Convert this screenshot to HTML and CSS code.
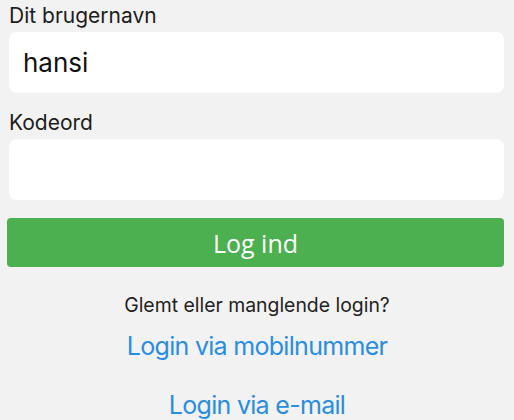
FILE: index.html
```html
<!DOCTYPE html>
<html lang="da">
<head>
    <meta charset="UTF-8">
    <meta name="viewport" content="width=device-width, initial-scale=1.0">
    <title>Log ind</title>
    <link rel="stylesheet" href="styles.css">
</head>
<body>
    <div class="container">
        <form id="login-form">
            <div class="form-group">
                <label for="brugernavn">Dit brugernavn</label>
                <input type="text" id="brugernavn" value="hansi">
            </div>
            <div class="form-group">
                <label for="kodeord">Kodeord</label>
                <input type="password" id="kodeord">
            </div>
            <button type="submit">Log ind</button>
        </form>

        <div class="help">
            <p class="help-text">Glemt eller manglende login?</p>
            <a href="#" class="help-link">Login via mobilnummer</a>
            <a href="#" class="help-link">Login via e-mail</a>
        </div>
    </div>
</body>
</html>
```

FILE: styles.css
```css
body {
    font-family: Inter, "Noto Sans", sans-serif;
    margin: 0;
    background-color: #f2f2f2;
    color: #1c1c1c;
    overflow: hidden;
}
.container {
    padding: 4px 7px 0 7px;
}
.form-group {
    margin-bottom: 18px;
}
label {
    display: block;
    font-size: 21px;
    line-height: 24px;
    margin: 0 2px 4px 2px;
}
input[type="text"],
input[type="password"] {
    display: block;
    box-sizing: border-box;
    width: calc(100% - 5px);
    height: 61px;
    margin-left: 2px;
    padding: 0 14px;
    border: none;
    border-radius: 8px;
    background-color: #fff;
    font-family: Inter, "Noto Sans", sans-serif;
    font-size: 26px;
    color: #111;
    outline: none;
}
button {
    display: block;
    width: calc(100% - 3px);
    height: 49px;
    background-color: #4caf50;
    color: #fff;
    border: none;
    border-radius: 4px;
    font-family: "Open Sans", sans-serif;
    font-size: 25px;
    cursor: pointer;
}
.help {
    display: flex;
    flex-direction: column;
    align-items: center;
    padding-top: 26px;
}
.help-text {
    margin: 0 0 13px 0;
    font-size: 19.4px;
    line-height: 24px;
    color: #222;
}
.help-link {
    font-size: 25px;
    line-height: 32px;
    letter-spacing: -0.7px;
    color: #2a8de0;
    text-decoration: none;
    margin-bottom: 27px;
}
```
